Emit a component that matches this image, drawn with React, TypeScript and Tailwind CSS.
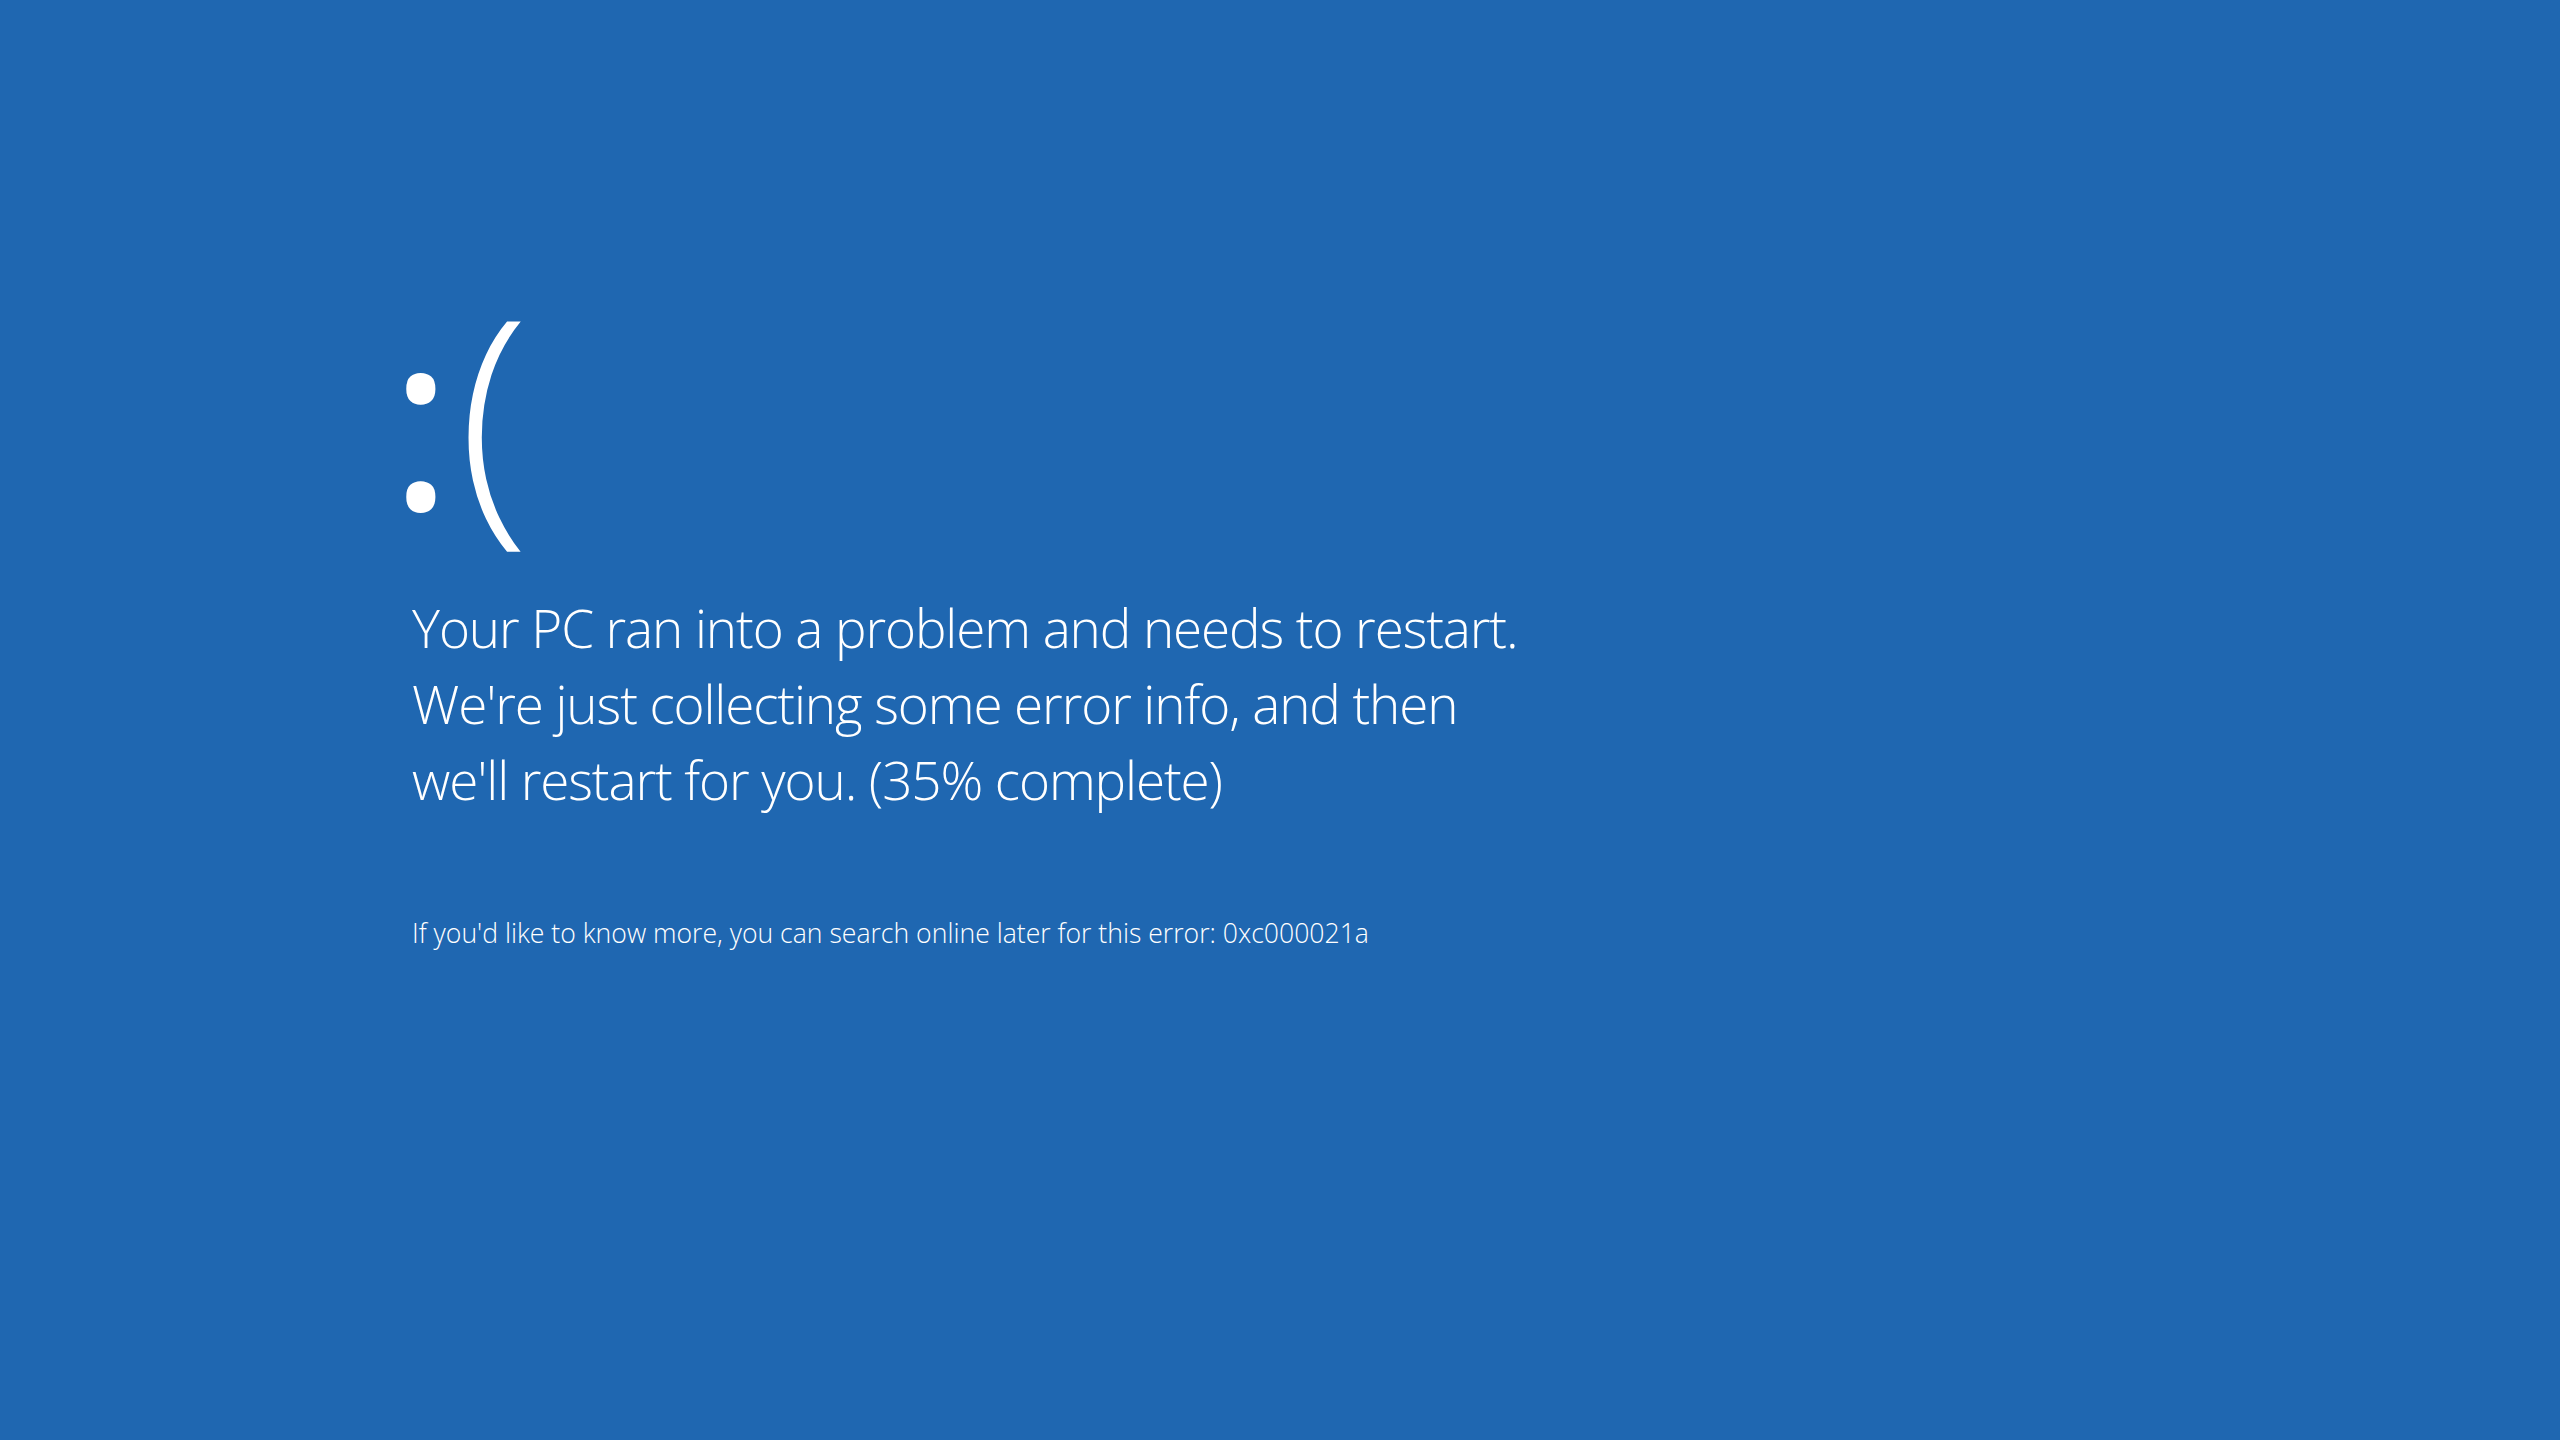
export default function App() {
  return (
    <div className="flex min-h-[1440px] w-full flex-col bg-[#1f67b1] pl-[412px] pt-[276px] font-['Open_Sans',sans-serif] font-light text-white">
      <div className="flex h-[270px] items-baseline leading-none">
        <span className="-ml-[24px] text-[250px] font-medium">:</span>
        <span className="ml-[4px] text-[264px]">(</span>
      </div>
      <div className="mt-[44px] whitespace-nowrap text-[53px] leading-[76px] tracking-[-1.1px]">
        <p>Your PC ran into a problem and needs to restart.</p>
        <p>We're just collecting some error info, and then</p>
        <p>we'll restart for you. (35% complete)</p>
      </div>
      <p className="mt-[102px] whitespace-nowrap text-[26.6px] leading-none">
        If you'd like to know more, you can search online later for this error: 0xc000021a
      </p>
    </div>
  );
}
